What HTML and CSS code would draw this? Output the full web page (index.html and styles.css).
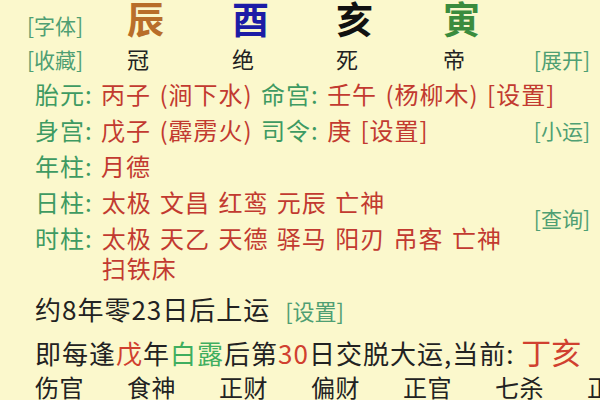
FILE: index.html
```html
<!DOCTYPE html>
<html lang="zh-CN">
<head>
  <meta charset="UTF-8">
  <meta name="viewport" content="width=device-width, initial-scale=1.0">
  <title>排盘</title>
  <link rel="stylesheet" href="styles.css">
</head>

<body>
  <div class="page">
    <div class="pillars stems">
      <span class="tag">[字体]</span>
      <span class="stem brown">辰</span>
      <span class="stem blue">酉</span>
      <span class="stem black">亥</span>
      <span class="stem green">寅</span>
    </div>

    <div class="pillars branches">
      <span class="tag">[收藏]</span>
      <span>冠</span>
      <span>绝</span>
      <span>死</span>
      <span>帝</span>
      <span class="tag side">[展开]</span>
    </div>

    <div class="info">
      <div class="line">
        <span class="key">胎元:</span> <span class="val">丙子 (涧下水)</span> <span class="key">命宫:</span> <span class="val">壬午 (杨柳木) [设置]</span>
      </div>

      <div class="row">
        <div class="line">
          <span class="key">身宫:</span> <span class="val">戊子 (霹雳火)</span> <span class="key">司令:</span> <span class="val">庚 [设置]</span>
        </div>
        <span class="tag">[小运]</span>
      </div>

      <div class="line">
        <span class="key">年柱:</span> <span class="val">月德</span>
      </div>

      <div class="row">
        <div class="stack">
          <div class="line pair">
            <span class="key">日柱:</span>
            <span class="val">太极 文昌 红鸾 元辰 亡神</span>
          </div>
          <div class="line pair">
            <span class="key">时柱:</span>
            <span class="val">太极 天乙 天德 驿马 阳刃 吊客 亡神 扫铁床</span>
          </div>
        </div>
        <span class="tag query">[查询]</span>
      </div>
    </div>

    <div class="luck">
      <div class="line">约8年零23日后上运 <span class="tag">[设置]</span></div>
      <div class="line">即每逢<span class="red">戊</span>年<span class="lime">白露</span>后第<span class="red">30</span>日交脱大运,当前: <span class="current">丁亥</span></div>
    </div>

    <div class="gods">
      <span>伤官</span>
      <span>食神</span>
      <span>正财</span>
      <span>偏财</span>
      <span>正官</span>
      <span>七杀</span>
      <span>正印</span>
    </div>
  </div>
</body>
</html>
```

FILE: styles.css
```css
:root {
  --bg: #fbf8cc;
  --green: #3e9a62;
  --tag: #4f9f73;
  --red: #c23a30;
  --ink: #222;
}

* {
  box-sizing: border-box;
  margin: 0;
  padding: 0;
}

html, body {
  overflow: hidden;
}

body {
  font-family: "Noto Sans CJK SC", "Noto Sans", sans-serif;
  background: var(--bg);
  color: var(--ink);
}

.page {
  padding: 0 10px 0 27px;
  height: 400px;
  overflow: hidden;
}

.tag {
  font-size: 21px;
  line-height: 30px;
  color: var(--tag);
  white-space: nowrap;
}

/* four pillars header */
.pillars {
  display: grid;
  grid-template-columns: 100px 105px 104px 107px 1fr auto;
  align-items: baseline;
}

.pillars .tag {
  line-height: 24px;
}

.stem {
  font-size: 37px;
  font-weight: 700;
  line-height: 36px;
}

.brown { color: #b86e2a; }
.blue { color: #1c1ca6; }
.black { color: #111; }
.green { color: #3a8c3e; }

.branches {
  margin-top: 6px;
  font-size: 22px;
  line-height: 30px;
}

/* info rows */
.info {
  padding-left: 8px;
  font-size: 24px;
  line-height: 30px;
  letter-spacing: 1px;
  word-spacing: 2px;
}

.info > .line,
.info > .row {
  margin-top: 6px;
}

.key {
  color: var(--green);
}

.val {
  color: var(--red);
}

.row {
  display: flex;
  align-items: flex-start;
}

.row > .tag {
  margin-left: auto;
  letter-spacing: 0;
}

.stack {
  flex: 1;
}

.stack .line + .line {
  margin-top: 6px;
}

.pair {
  display: flex;
  align-items: flex-start;
}

.pair .key {
  margin-right: 9px;
  flex-shrink: 0;
}

.pair .val {
  max-width: 420px;
}

.query {
  margin-top: 16px;
}

/* luck */
.luck {
  padding-left: 8px;
  font-size: 26px;
  line-height: 32px;
  letter-spacing: 1px;
}

.luck .line {
  margin-top: 10px;
  white-space: nowrap;
}

.luck .tag {
  margin-left: 8px;
  font-size: 22px;
  letter-spacing: 0;
}

.red { color: #d0402f; }
.lime { color: #3fae5f; }

.current {
  font-size: 30px;
  letter-spacing: 0;
  color: #d0402f;
}

.gods {
  display: grid;
  grid-template-columns: repeat(7, 92px);
  margin-top: 3px;
  padding-left: 8px;
  font-size: 24px;
  line-height: 30px;
  letter-spacing: 0.5px;
  white-space: nowrap;
}
```
